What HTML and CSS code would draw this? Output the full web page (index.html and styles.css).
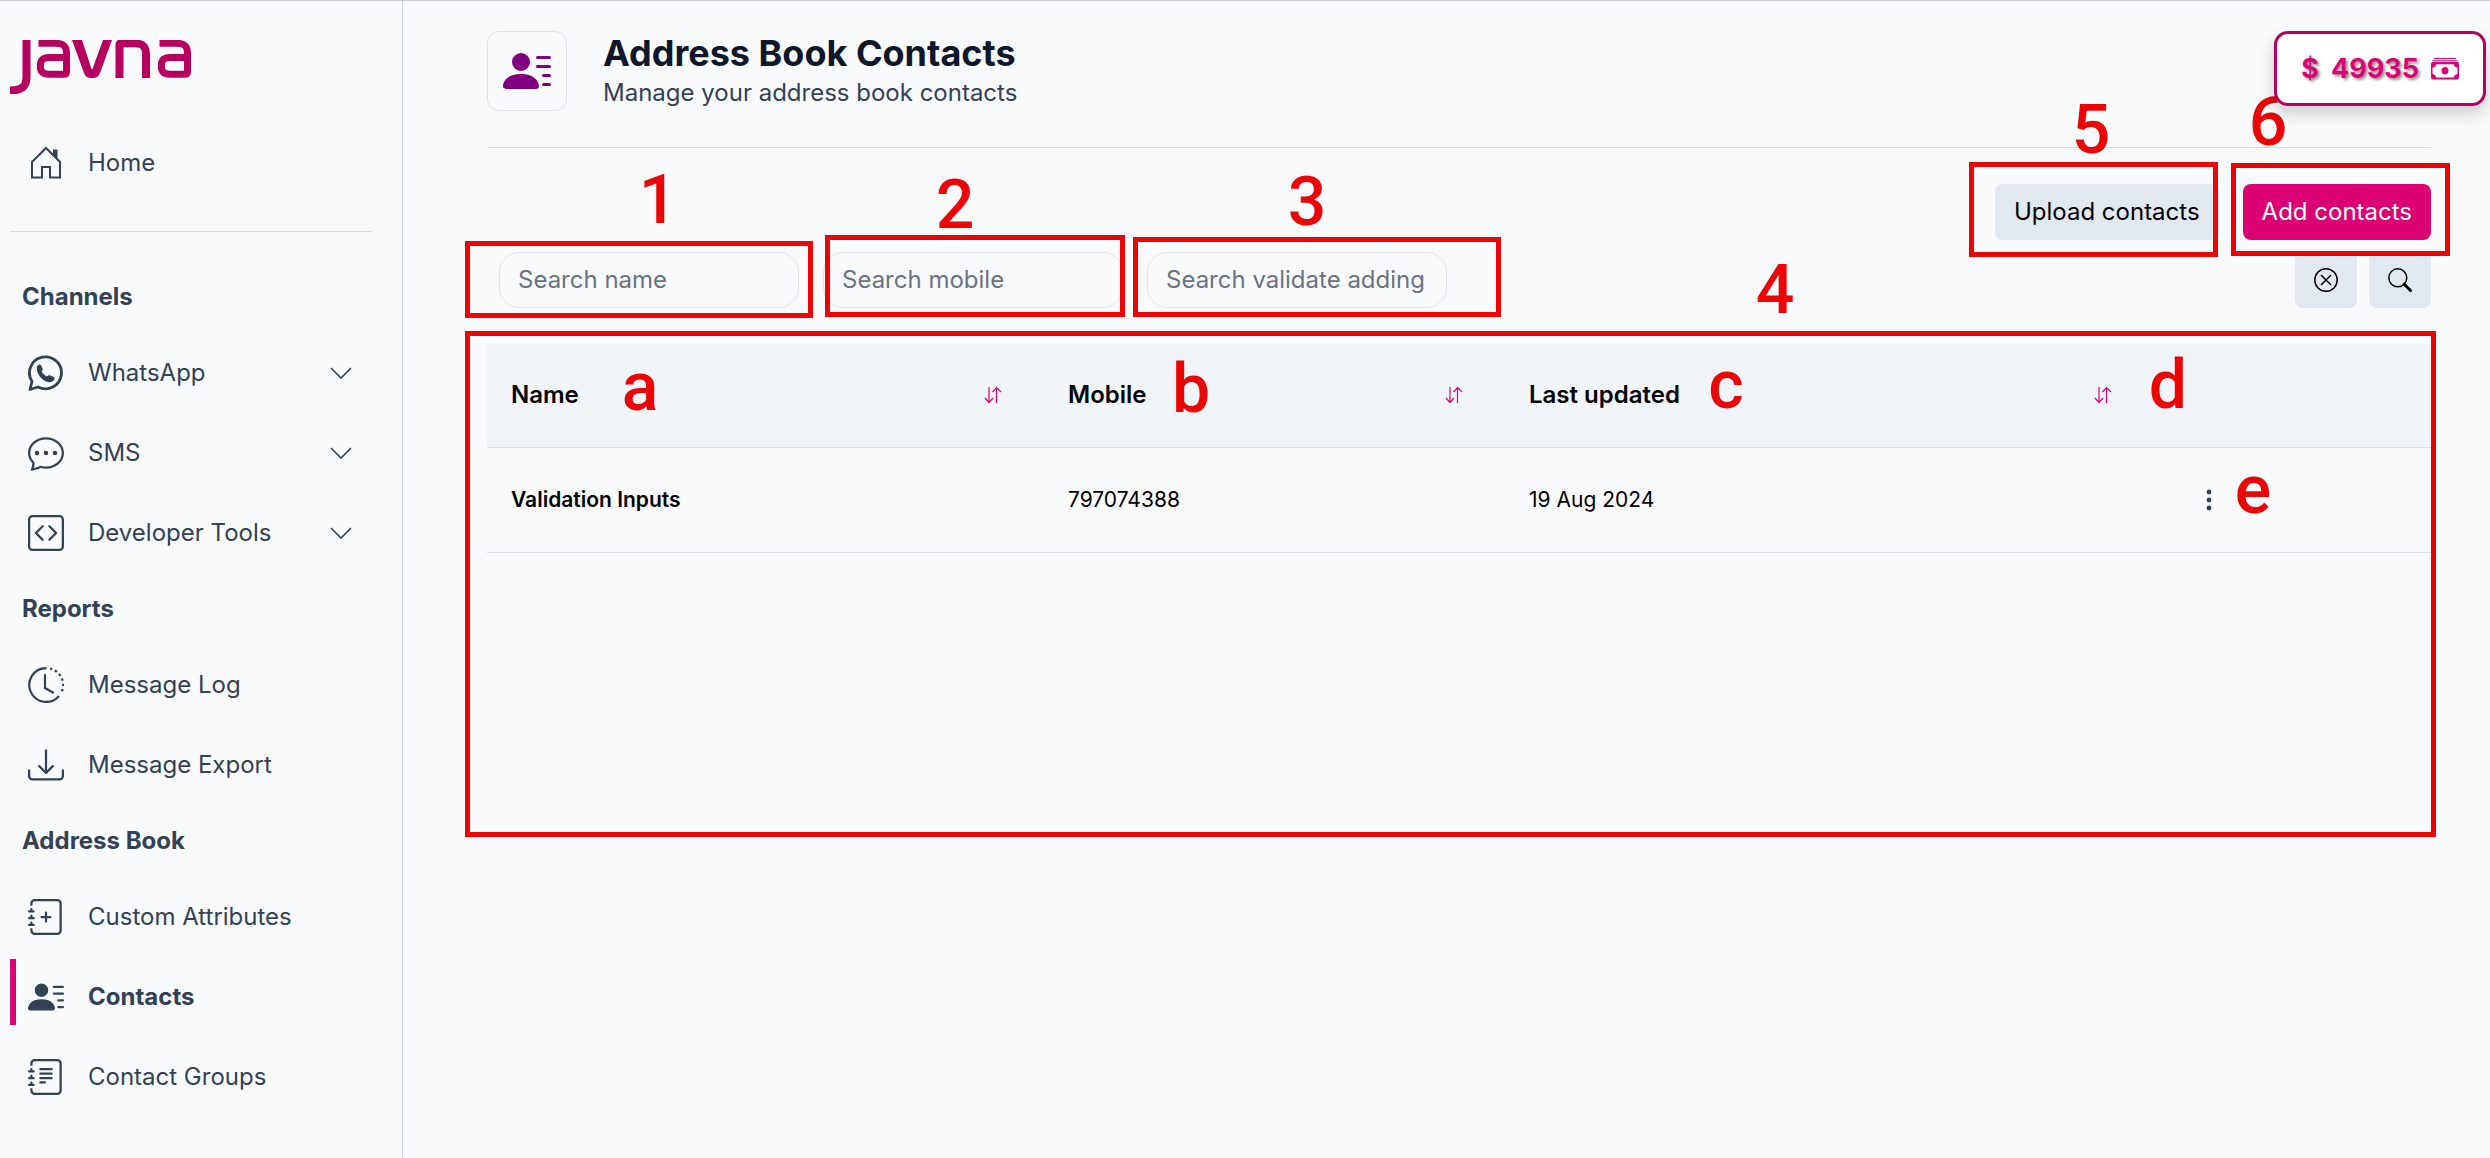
FILE: index.html
```html
<!DOCTYPE html>
<html lang="en">
<head>
<meta charset="utf-8">
<meta name="viewport" content="width=device-width, initial-scale=1">
<title>Address Book Contacts</title>
<link rel="stylesheet" href="styles.css">
</head>
<body>
<svg class="sprite" aria-hidden="true">
  <symbol id="chevron" viewBox="0 0 22 12"><path d="M1 1l10 10L21 1" fill="none" stroke="currentColor" stroke-width="1.6"/></symbol>
  <symbol id="person" viewBox="0 0 16 16"><path d="M6 8a3 3 0 1 0 0-6 3 3 0 0 0 0 6m-5 6s-1 0-1-1 1-4 6-4 6 3 6 4-1 1-1 1zM11 3.5a.5.5 0 0 1 .5-.5h4a.5.5 0 0 1 0 1h-4a.5.5 0 0 1-.5-.5m.5 2.500a.5.5 0 0 0 0 1h4a.5.5 0 0 0 0-1zm2 3a.5.5 0 0 0 0 1h2a.5.5 0 0 0 0-1zm0 3a.5.5 0 0 0 0 1h2a.5.5 0 0 0 0-1z"/></symbol>
  <symbol id="journal" viewBox="0 0 16 16"><path d="M3 0h10a2 2 0 0 1 2 2v12a2 2 0 0 1-2 2H3a2 2 0 0 1-2-2v-1h1v1a1 1 0 0 0 1 1h10a1 1 0 0 0 1-1V2a1 1 0 0 0-1-1H3a1 1 0 0 0-1 1v1H1V2a2 2 0 0 1 2-2"/><path d="M1 5v-.5a.5.5 0 0 1 1 0V5h.5a.5.5 0 0 1 0 1h-2a.5.5 0 0 1 0-1zm0 3v-.5a.5.5 0 0 1 1 0V8h.5a.5.5 0 0 1 0 1h-2a.5.5 0 0 1 0-1zm0 3v-.5a.5.5 0 0 1 1 0v.5h.5a.5.5 0 0 1 0 1h-2a.5.5 0 0 1 0-1z"/></symbol>
  <symbol id="sort" viewBox="0 0 18 18"><path d="M5 1v15M1 12l4 4.500 4-4.500M12.500 17V2M8.500 6l4-4.500 4.500 4.500" fill="none" stroke="currentColor" stroke-width="1.200"/></symbol>
</svg>

<div class="layout">
  <aside class="sidebar">
    <a class="logo" href="#" aria-label="javna">
      <svg width="182" height="54" viewBox="0 0 182 54" fill="none" stroke="currentColor" stroke-width="8">
        <path d="M16.500 0V37C16.500 47 11 50.500 0 50.500" stroke-width="8"/>
        <path d="M28.500 3.300H45c9 0 11.500 3 11.500 10v18.500c0 2-.5 2.500-2.500 2.500H39.500c-6 0-9.200-2-9.200-8.300s3.200-8.500 9.200-8.500H56" stroke-width="7"/>
        <path d="M62 0h10l9.500 29h1L93 0h9L90 33c-2 4.500-4 5-8 5s-6-.5-8-5z" fill="currentColor" stroke="none"/>
        <path d="M109.500 38V5.500q0-2.200 2.200-2.200H124c9 0 12 3 12 11V38" stroke-width="8"/>
        <path d="M149.500 3.300H166c9 0 11.500 3 11.500 10v18.500c0 2-.5 2.500-2.500 2.500h-14.500c-6 0-9.200-2-9.200-8.300s3.200-8.500 9.200-8.500H177" stroke-width="7"/>
      </svg>
    </a>
    <nav class="nav">
      <a class="nav-item" href="#">
        <svg class="icon" viewBox="0 0 36 36" fill="none" stroke="currentColor" stroke-width="2"><path d="M4 32.500V17L18 3l14 14v15.500H22V22h-8v10.500z"/><path d="M25 4.500h4.500v9.500L25 9.500z" fill="currentColor" stroke="none"/></svg>
        <span>Home</span>
      </a>
      <hr class="rule">
      <h2 class="nav-heading">Channels</h2>
      <a class="nav-item" href="#">
        <svg class="icon" viewBox="0 0 36 36"><path d="M2 34.500l2-8A16 16 0 1 1 10 32z" fill="none" stroke="currentColor" stroke-width="2.800" stroke-linejoin="round"/><path d="M9 11c2-2.500 4-2 5 1l.7 2.300c-1 2-1.200 2.700 0 4s2.500 2.500 4 3.200c1.300-.8 2.200-1.800 3.800-1l3.700 1.700c1.500 2.800-2 5-5 5C15 27 7.500 19 9 11z"/></svg>
        <span>WhatsApp</span><svg class="chevron" aria-hidden="true"><use href="#chevron"/></svg>
      </a>
      <a class="nav-item" href="#">
        <svg class="icon" viewBox="0 0 16 16"><path d="M5 8a1 1 0 1 1-2 0 1 1 0 0 1 2 0m4 0a1 1 0 1 1-2 0 1 1 0 0 1 2 0m3 1a1 1 0 1 0 0-2 1 1 0 0 0 0 2"/><path d="m2.165 15.803.02-.004c1.830-.363 2.948-.842 3.468-1.105A9 9 0 0 0 8 15c4.418 0 8-3.134 8-7s-3.582-7-8-7-8 3.134-8 7c0 1.760.743 3.370 1.970 4.600a10.400 10.400 0 0 1-.524 2.318l-.003.011a11 11 0 0 1-.244.637c-.079.186.074.394.273.362a22 22 0 0 0 .693-.125m.8-3.108a1 1 0 0 0-.287-.801C1.618 10.830 1 9.468 1 8c0-3.192 3.004-6 7-6s7 2.808 7 6-3.004 6-7 6a8 8 0 0 1-2.088-.272 1 1 0 0 0-.711.074c-.387.196-1.240.570-2.634.893a11 11 0 0 0 .398-2"/></svg>
        <span>SMS</span><svg class="chevron" aria-hidden="true"><use href="#chevron"/></svg>
      </a>
      <a class="nav-item" href="#">
        <svg class="icon" viewBox="0 0 16 16"><rect x=".5" y=".5" width="15" height="15" rx="1.500" fill="none" stroke="currentColor"/><path d="M6.854 4.646a.5.5 0 0 1 0 .708L4.207 8l2.647 2.646a.5.5 0 0 1-.708.708l-3-3a.5.5 0 0 1 0-.708l3-3a.5.5 0 0 1 .708 0m2.292 0a.5.5 0 0 0 0 .708L11.793 8l-2.647 2.646a.5.5 0 0 0 .708.708l3-3a.5.5 0 0 0 0-.708l-3-3a.5.5 0 0 0-.708 0"/></svg>
        <span>Developer Tools</span><svg class="chevron" aria-hidden="true"><use href="#chevron"/></svg>
      </a>
      <h2 class="nav-heading">Reports</h2>
      <a class="nav-item" href="#">
        <svg class="icon" viewBox="0 0 36 36" fill="none" stroke="currentColor" stroke-width="2.200"><path d="M18.500 1.100A16.900 16.900 0 1 0 31 29"/><path d="M22 1.600A16.900 16.900 0 0 1 32.600 27" stroke-dasharray="2.400 2.900"/><path d="M17 8v13l8 4.500" stroke-linecap="round"/></svg>
        <span>Message Log</span>
      </a>
      <a class="nav-item" href="#">
        <svg class="icon" viewBox="0 0 16 16"><path d="M.5 9.900a.5.5 0 0 1 .5.5v2.500a1 1 0 0 0 1 1h12a1 1 0 0 0 1-1v-2.500a.5.5 0 0 1 1 0v2.500a2 2 0 0 1-2 2H2a2 2 0 0 1-2-2v-2.500a.5.5 0 0 1 .5-.5"/><path d="M7.646 11.854a.5.5 0 0 0 .708 0l3-3a.5.5 0 0 0-.708-.708L8.500 10.293V1.500a.5.5 0 0 0-1 0v8.793L5.354 8.146a.5.5 0 1 0-.708.708z"/></svg>
        <span>Message Export</span>
      </a>
      <h2 class="nav-heading">Address Book</h2>
      <a class="nav-item" href="#">
        <svg class="icon" viewBox="0 0 16 16"><use href="#journal"/><path d="M8 6v4M6 8h4" stroke="currentColor" stroke-linecap="round"/></svg>
        <span>Custom Attributes</span>
      </a>
      <a class="nav-item active" href="#" aria-current="page">
        <svg class="icon"><use href="#person"/></svg>
        <span>Contacts</span>
      </a>
      <a class="nav-item" href="#">
        <svg class="icon" viewBox="0 0 16 16"><use href="#journal"/><path d="M5.500 4.500h5M5.500 6.500h5M5.500 8.500h5M5.500 10.400h2" stroke="currentColor" stroke-linecap="round"/></svg>
        <span>Contact Groups</span>
      </a>
    </nav>
  </aside>

  <main class="main">
    <header class="page-header">
      <div class="page-icon"><svg><use href="#person"/></svg></div>
      <div>
        <h1 class="title">Address Book Contacts</h1>
        <p class="subtitle">Manage your address book contacts</p>
      </div>
    </header>
    <div class="actions">
      <button class="btn" type="button">Upload contacts</button>
      <button class="btn btn-primary" type="button">Add contacts</button>
    </div>
    <form class="filters">
      <input class="field" type="text" placeholder="Search name" aria-label="Search name">
      <input class="field" type="text" placeholder="Search mobile" aria-label="Search mobile">
      <input class="field" type="text" placeholder="Search validate adding" aria-label="Search validate adding">
      <div class="filter-buttons">
        <button class="btn btn-icon" type="reset" aria-label="Clear"><svg viewBox="0 0 24 24" fill="none" stroke="currentColor" stroke-width="1.500"><circle cx="12" cy="12" r="11.200"/><path d="M7 7l10 10M17 7L7 17"/></svg></button>
        <button class="btn btn-icon" type="button" aria-label="Search"><svg viewBox="0 0 24 24" fill="none" stroke="currentColor" stroke-width="1.500"><circle cx="9.800" cy="9.800" r="9"/><path d="M16.200 16.200l6.300 6.300" stroke-width="3" stroke-linecap="round"/></svg></button>
      </div>
    </form>
    <table class="contacts">
      <colgroup><col class="col-name"><col class="col-mobile"><col class="col-updated"><col></colgroup>
      <thead>
        <tr>
          <th scope="col"><div class="th">Name <svg class="sort"><use href="#sort"/></svg></div></th>
          <th scope="col"><div class="th">Mobile <svg class="sort"><use href="#sort"/></svg></div></th>
          <th scope="col"><div class="th">Last updated <svg class="sort"><use href="#sort"/></svg></div></th>
          <th></th>
        </tr>
      </thead>
      <tbody>
        <tr>
          <td class="name">Validation Inputs</td>
          <td>797074388</td>
          <td>19 Aug 2024</td>
          <td><button class="more" type="button" aria-label="More"><svg width="6" height="22" viewBox="0 0 6 22"><circle cx="3" cy="3" r="2.400"/><circle cx="3" cy="11" r="2.400"/><circle cx="3" cy="19" r="2.400"/></svg></button></td>
        </tr>
      </tbody>
    </table>
  </main>
</div>

<div class="notes">
  <div class="box box-1"></div><div class="box box-2"></div><div class="box box-3"></div>
  <div class="box box-4"></div><div class="box box-5"></div><div class="box box-6"></div>
  <span class="mark mark-1">1</span><span class="mark mark-2">2</span><span class="mark mark-3">3</span>
  <span class="mark mark-4">4</span><span class="mark mark-5">5</span><span class="mark mark-6">6</span>
  <span class="mark mark-a">a</span><span class="mark mark-b">b</span><span class="mark mark-c">c</span>
  <span class="mark mark-d">d</span><span class="mark mark-e">e</span>
</div>

<div class="balance">
  <span>$</span><span>49935</span>
  <svg width="28" height="22" viewBox="0 0 28 22"><path d="M3 0h22v1H3zM1.500 2.200h25v1h-25z"/><path fill-rule="evenodd" d="M2 4h24q2 0 2 2v13.500q0 2-2 2H2q-2 0-2-2V6q0-2 2-2zm3 2.200q0 3-3.500 3.500v6.300q3.500.5 3.500 3.500h18q0-3 3.500-3.500V9.700Q23 9.200 23 6.200z"/><ellipse cx="14" cy="12.700" rx="3.500" ry="3.700"/></svg>
</div>
</body>
</html>
```

FILE: styles.css
```css
* { box-sizing: border-box; }

body {
  margin: 0;
  position: relative;
  border-top: 1px solid #c9cbcf;
  background: #f9fafc;
  color: #334155;
  font: 400 24px/30px Inter, "Liberation Sans", sans-serif;
}

svg { flex: none; }
svg:not([fill]) { fill: currentColor; }
.sprite { position: absolute; width: 0; height: 0; }
h1, h2, p { margin: 0; }
button, input { font: inherit; }

.layout { display: flex; min-height: calc(100vh - 1px); }

/* Sidebar */
.sidebar {
  flex: none;
  width: 403px;
  padding: 39px 30px 0 10px;
  border-right: 1px solid #cbd5e1;
}
.logo { display: block; height: 54px; color: #b5005f; }
.nav { margin-top: 31px; }
.nav-item {
  display: flex;
  align-items: center;
  gap: 24px;
  height: 66px;
  margin-bottom: 14px;
  padding: 10px 20px 0 12px;
  border-left: 6px solid transparent;
  color: inherit;
  text-decoration: none;
}
.nav-item.active { border-color: #db0073; font-weight: 700; }
.icon { width: 36px; height: 36px; }
.chevron { width: 22px; height: 12px; margin-left: auto; }
.rule { height: 1px; margin: 40px 0 31px; border: 0; background: #d8dade; }
.nav-heading {
  height: 72px;
  padding: 19px 12px 0;
  font-size: 24px;
  font-weight: 700;
}

/* Main column */
.main { flex: 1; min-width: 0; padding: 30px 59px 0 84px; }
.page-header {
  display: flex;
  gap: 36px;
  height: 117px;
  border-bottom: 1px solid #d8dade;
}
.page-icon {
  display: grid;
  place-items: center;
  width: 80px;
  height: 80px;
  border: 1px solid #e0e3e8;
  border-radius: 12px;
  color: #800080;
}
.page-icon svg { width: 48px; height: 48px; }
.title { color: #0f172a; font-size: 36px; font-weight: 700; line-height: 44px; }
.subtitle { line-height: 36px; }

.actions { display: flex; justify-content: flex-end; gap: 24px; margin-top: 36px; }
.btn {
  height: 56px;
  padding: 0 19px;
  border: 0;
  border-radius: 8px;
  background: #e2e8f0;
  color: #000;
}
.btn-primary { background: #db0073; color: #fff; }
.btn-icon { display: grid; place-items: center; width: 62px; }
.btn-icon svg { width: 24px; height: 24px; }

.filters { display: flex; gap: 24px; margin-top: 12px; padding-left: 12px; }
.field {
  width: 300px;
  height: 56px;
  padding: 0 18px 2px;
  border: 1px solid #e2e4e8;
  border-radius: 20px;
  background: transparent;
}
.field::placeholder { color: #6b7280; opacity: 1; }
.filter-buttons { display: flex; gap: 12px; margin-left: auto; }

.contacts {
  width: 100%;
  margin-top: 36px;
  border-collapse: collapse;
  table-layout: fixed;
  color: #000;
  font-size: 21px;
}
.col-name { width: 557px; }
.col-mobile { width: 461px; }
.col-updated { width: 649px; }
.contacts th, .contacts td {
  height: 105px;
  padding: 0 24px;
  border-bottom: 1px solid #dcdfe4;
  text-align: left;
}
.contacts thead { background: #f1f4f9; }
.contacts th { height: 103px; padding-right: 42px; font-size: 24px; font-weight: 600; }
.th { display: flex; align-items: center; justify-content: space-between; }
.sort { width: 18px; height: 18px; color: #db0073; }
.contacts .name { font-weight: 600; }
.more {
  display: grid;
  place-items: center;
  width: 62px;
  height: 44px;
  padding: 0;
  border: 0;
  background: none;
  color: #334155;
}

/* Balance badge */
.balance {
  position: absolute;
  top: 30px;
  right: 4px;
  display: flex;
  align-items: center;
  gap: 12px;
  height: 75px;
  padding: 0 24px;
  border: 3px solid #b5005f;
  border-radius: 14px;
  background: #fff;
  box-shadow: 0 8px 16px rgba(0, 0, 0, .18);
  color: #db0073;
  font-size: 27px;
  font-weight: 700;
  text-shadow: 2px 2px 3px rgba(0, 0, 0, .45);
}

/* Numbered callouts laid over the page */
.box { position: absolute; border: 5px solid #ea0606; pointer-events: none; }
.box-1 { left: 465px; top: 240px; width: 348px; height: 77px; }
.box-2 { left: 825px; top: 234px; width: 300px; height: 82px; }
.box-3 { left: 1133px; top: 236px; width: 368px; height: 80px; }
.box-4 { left: 465px; right: 54px; top: 330px; height: 506px; }
.box-5 { right: 272px; top: 161px; width: 249px; height: 95px; }
.box-6 { right: 40px; top: 162px; width: 219px; height: 93px; }
.mark {
  position: absolute;
  width: 40px;
  color: #ea0606;
  font: 500 68px/68px Roboto, "Liberation Sans", sans-serif;
  text-align: center;
  pointer-events: none;
}
.mark-1 { left: 638px; top: 165px; }
.mark-2 { left: 935px; top: 170px; }
.mark-3 { left: 1287px; top: 167px; }
.mark-4 { left: 1755px; top: 255px; }
.mark-5 { right: 379px; top: 95px; }
.mark-6 { right: 202px; top: 87px; }
.mark-a { left: 620px; top: 352px; }
.mark-b { left: 1171px; top: 354px; }
.mark-c { left: 1706px; top: 350px; }
.mark-d { right: 302px; top: 350px; }
.mark-e { right: 217px; top: 455px; }
```
